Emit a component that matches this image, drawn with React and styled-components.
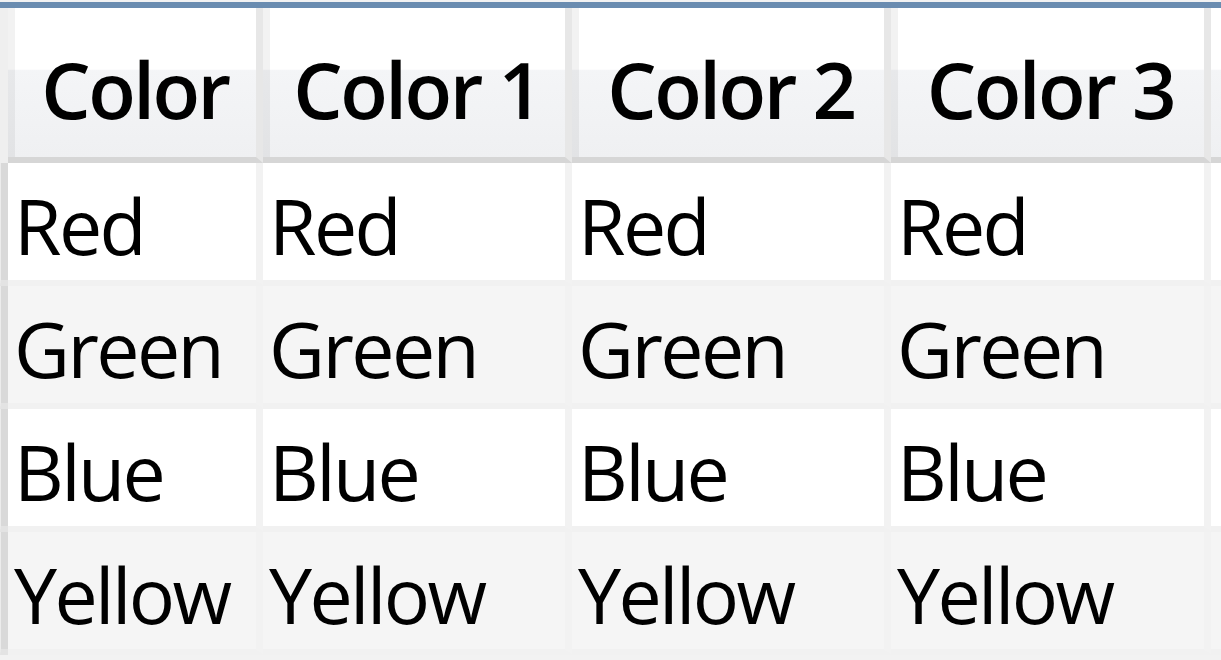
import React from "react"
import styled, { createGlobalStyle } from "styled-components"

const columns = ["Color", "Color 1", "Color 2", "Color 3"]
const rows = ["Red", "Green", "Blue", "Yellow"]

const App = () => {
    return (
        <>
            <GlobalStyle />
            <Frame>
                <Grid>
                    <Corner />
                    {columns.map((c) => (
                        <HeaderCell key={c}>{c}</HeaderCell>
                    ))}
                    <HeaderFiller />

                    {rows.map((r, i) => (
                        <React.Fragment key={r}>
                            <RowHeader />
                            {columns.map((c) => (
                                <Cell key={c} $alt={i % 2 === 1}>{r}</Cell>
                            ))}
                            <Filler $alt={i % 2 === 1} />
                        </React.Fragment>
                    ))}
                </Grid>
            </Frame>
        </>
    )
}

export default App

// Style
const GlobalStyle = createGlobalStyle`
    html, body {
        margin: 0;
        padding: 0;
        background: #ffffff;
    }

    body {
        font-family: "Open Sans", "Noto Sans", sans-serif;
        color: #000000;
    }
`

const Frame = styled.div`
    width: 1221px;
    height: 660px;
    overflow: hidden;
    padding-top: 2px;
    box-sizing: border-box;
    background: #f2f2f2;
`

const Grid = styled.div`
    display: grid;
    grid-template-columns: 8px 255px 309px 319px 320px 1fr;
    grid-template-rows: 155px repeat(4, 123px);
    border-top: 6px solid #6a8cb0;
`

const Corner = styled.div`
    background: #efefef;
`

const HeaderCell = styled.div`
    display: flex;
    align-items: center;
    justify-content: center;
    padding: 12px 0 0 6px;
    box-sizing: border-box;
    font-size: 78px;
    font-weight: 600;
    letter-spacing: -2.5px;
    background: linear-gradient(to bottom, #ffffff 0%, #ffffff 41%, #f4f5f7 42%, #eff0f2 100%);
    border-right: 7px solid #e7e7e7;
    border-bottom: 6px solid #d6d6d6;
    box-shadow: inset 7px 0 0 rgba(0, 0, 0, 0.05);
`

const HeaderFiller = styled.div`
    background: linear-gradient(to bottom, #ffffff 0%, #ffffff 41%, #f4f5f7 42%, #eff0f2 100%);
    border-bottom: 6px solid #d6d6d6;
`

const RowHeader = styled.div`
    background: #d9d9d9;
    border-left: 1px solid #ececec;
    border-bottom: 6px solid #e3e3e3;
`

const Cell = styled.div`
    display: flex;
    align-items: center;
    padding: 8px 0 0 6px;
    box-sizing: border-box;
    font-size: 77px;
    letter-spacing: -2.6px;
    background: ${(p) => (p.$alt ? "#f5f5f5" : "#ffffff")};
    border-right: 7px solid #f2f2f2;
    border-bottom: 6px solid #f1f1f1;
`

const Filler = styled.div`
    background: ${(p) => (p.$alt ? "#f5f5f5" : "#ffffff")};
    border-bottom: 6px solid #f1f1f1;
`
